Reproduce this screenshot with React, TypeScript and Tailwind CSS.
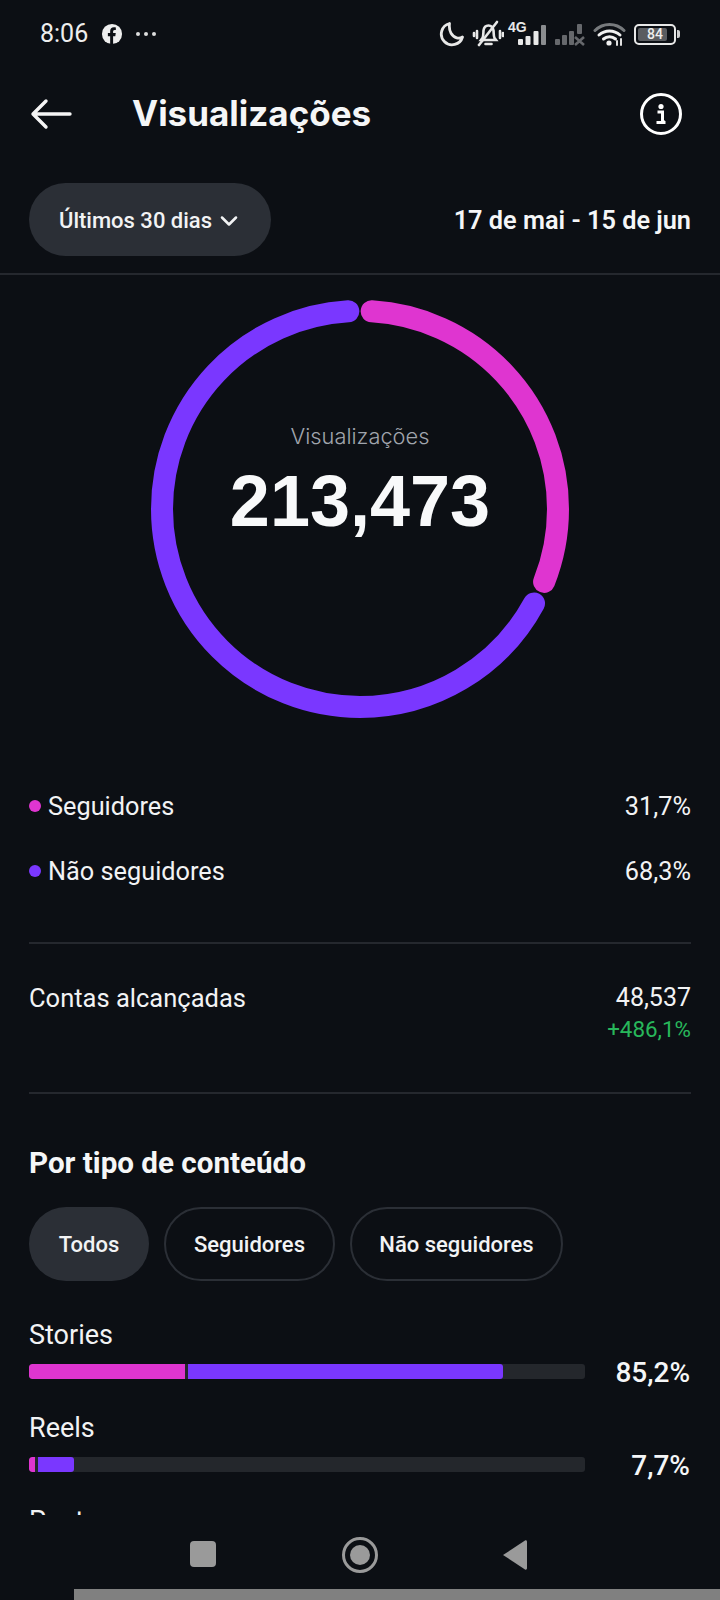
import React from 'react';
import { ChevronDown } from 'lucide-react';

const StatusIcons = () => (
  <div className="ml-auto flex items-center">
    <svg width="26" height="26" viewBox="0 0 26 26" fill="none" className="mr-[7px]">
      <path d="M10.5 2.5a10.8 10.8 0 1 0 13 13.5c-1.7 1-3.8 1.3-5.8.8C13.2 15.6 9.5 10.8 10.5 2.5z" stroke="#e8e8e8" strokeWidth="2.8" strokeLinejoin="round" />
    </svg>
    <svg width="32" height="28" viewBox="0 0 32 28" fill="none" className="mr-[4px]" stroke="#e8e8e8" strokeWidth="2.6" strokeLinecap="round">
      <path d="M10.5 18c1-2 .8-5 1-7.5.4-3 2.5-5 5-5s4.5 2 5 5c.3 2.5 0 5.5 1 7.5l1.5 2H9z" />
      <path d="M13.5 24h6" />
      <path d="M5 11v7M2 13v3M28 11v7M31 13v3" />
      <path d="M7 25L25 2" />
    </svg>
    <div className="relative mr-[8px] h-[26px] w-[39px]">
      <span className="absolute left-0 top-[-1px] font-['Liberation_Sans',sans-serif] text-[14px] leading-[14px] font-bold text-[#e8e8e8]">4G</span>
      <svg width="39" height="26" viewBox="0 0 39 26" className="absolute left-0 top-0" fill="#e8e8e8">
        <rect x="10" y="18" width="5" height="6" rx="1" />
        <rect x="17.5" y="15" width="5" height="9" rx="1" />
        <rect x="25.5" y="10" width="5" height="14" rx="1" />
        <rect x="33" y="4" width="5" height="20" rx="1" fill="#8a8c8f" />
      </svg>
    </div>
    <svg width="31" height="26" viewBox="0 0 31 26" fill="#66686c" className="mr-[7px]">
      <rect x="0" y="18" width="5" height="6" rx="1" />
      <rect x="7" y="14" width="5" height="10" rx="1" />
      <rect x="14" y="10" width="5" height="14" rx="1" />
      <rect x="22" y="3" width="5" height="10" rx="1" />
      <path d="M20 16l9 8M29 16l-9 8" stroke="#66686c" strokeWidth="2.6" fill="none" />
    </svg>
    <svg width="33" height="26" viewBox="0 0 33 26" fill="none" className="mr-[8px]" strokeLinecap="round">
      <path d="M2 9.5c8-8 21-8 29 0" stroke="#777a7d" strokeWidth="3" />
      <path d="M6 14c6-5.5 15-5.5 21 0" stroke="#f0f0f0" strokeWidth="3" />
      <path d="M10.5 18c3.5-3 8.5-3 12 0" stroke="#f0f0f0" strokeWidth="3" />
      <circle cx="16" cy="22" r="2.6" fill="#f0f0f0" />
      <path d="M24 24v-4M28 24v-6" stroke="#e0e0e0" strokeWidth="2" />
    </svg>
    <div className="flex items-center">
      <div className="relative h-[21px] w-[42px] rounded-[5px] border-2 border-[#e8e8e8] p-[2px]">
        <div className="h-full w-[84%] rounded-[2px] bg-[#5a5c60]" />
        <span className="absolute inset-0 flex items-center justify-center text-[14px] font-medium text-[#eeeeee]">84</span>
      </div>
      <div className="ml-[1px] h-[8px] w-[3px] rounded-r-[2px] bg-[#d0d0d0]" />
    </div>
  </div>
);

const Bar = ({ label, value, pink, blue }: { label: string; value: string; pink: number; blue: number }) => (
  <div>
    <div className="text-[27px] leading-[28px] text-[#f2f3f4]">{label}</div>
    <div className="mt-[15px] flex h-[15px] items-center">
      <div className="flex h-[15px] w-[556px] overflow-hidden rounded-[3px] bg-[#24272c]">
        <div className="h-full rounded-l-[3px] bg-[#df35d0]" style={{ width: pink }} />
        <div className="ml-[3px] h-full rounded-r-[3px] bg-[#7a37ff]" style={{ width: blue }} />
      </div>
      <span className="ml-auto pt-[2px] text-[28px] leading-[15px] font-medium text-[#f5f6f7]">{value}</span>
    </div>
  </div>
);

const App = () => {
  return (
    <div className="relative flex h-[1600px] w-[720px] flex-col overflow-hidden bg-[#0c0f14] font-['Roboto',sans-serif] text-white">
      {/* status bar */}
      <div className="flex h-[68px] items-center px-[40px]">
        <span className="text-[25px] font-normal text-[#eeeeee]">8:06</span>
        <svg width="22" height="22" viewBox="0 0 24 24" className="ml-[13px]">
          <circle cx="12" cy="12" r="11" fill="#eeeeee" />
          <path d="M10 23v-8.5H7.5V11H10V8.7C10 6 11.6 4.6 14 4.6c1.1 0 2.2.2 2.2.2v2.7h-1.3c-1.3 0-1.7.8-1.700 1.600V11h2.900l-.5 3.500h-2.400V23z" fill="#0c0f14" />
        </svg>
        <div className="ml-[13px] flex gap-[4px]">
          <span className="h-[4px] w-[4px] rounded-full bg-[#dddddd]" />
          <span className="h-[4px] w-[4px] rounded-full bg-[#dddddd]" />
          <span className="h-[4px] w-[4px] rounded-full bg-[#dddddd]" />
        </div>
        <StatusIcons />
      </div>

      {/* header */}
      <div className="flex h-[92px] items-center pl-[30px] pr-[38px]">
        <svg width="42" height="32" viewBox="0 0 42 32" fill="none" stroke="#f5f5f5" strokeWidth="3.4" strokeLinecap="round" strokeLinejoin="round">
          <path d="M40 16H3M16 3L3 16l13 13" />
        </svg>
        <h1 className="ml-[60px] pb-[1px] font-['Inter',sans-serif] text-[35px] font-bold text-[#f5f6f7]">Visualizações</h1>
        <svg width="42" height="42" viewBox="0 0 42 42" fill="none" className="ml-auto">
          <circle cx="21" cy="21" r="19.5" stroke="#ffffff" strokeWidth="3" />
          <circle cx="21" cy="13.5" r="2.6" fill="#ffffff" />
          <path d="M17.5 19h5v10h2.5M16.5 29.5h9" stroke="#ffffff" strokeWidth="3" />
        </svg>
      </div>

      {/* range */}
      <div className="mt-[23px] flex items-center justify-between px-[29px]">
        <button className="flex h-[73px] w-[242px] items-center rounded-full bg-[#2b2f36] pl-[30px] pt-[2px] text-[22px] font-medium text-[#f2f3f4]">
          Últimos 30 dias
          <ChevronDown className="ml-[3px]" size={28} strokeWidth={2.2} />
        </button>
        <span className="pt-[2px] text-[25.3px] font-semibold text-[#f5f6f7]">17 de mai - 15 de jun</span>
      </div>
      <div className="mt-[17px] h-[2px] bg-[#25282e]" />

      {/* donut */}
      <div className="relative mx-auto mt-[25px] h-[418px] w-[418px]">
        <svg width="418" height="418" viewBox="0 0 418 418" fill="none">
          <g transform="rotate(-90 209 209)" strokeWidth="22" strokeLinecap="round">
            <circle cx="209" cy="209" r="198" pathLength={360} stroke="#7a37ff" strokeDasharray="238.1 121.9" strokeDashoffset={-118.5} />
            <circle cx="209" cy="209" r="198" pathLength={360} stroke="#df35d0" strokeDasharray="108.2 251.8" strokeDashoffset={-3.4} />
          </g>
        </svg>
        <div className="absolute inset-0 flex flex-col items-center pt-[122px]">
          <span className="font-['Inter',sans-serif] text-[21.8px] leading-[28px] font-light text-[#a0a5ad]">Visualizações</span>
          <span className="mt-[9px] font-['Liberation_Sans',sans-serif] text-[72px] leading-[84px] font-bold text-[#f8f9fa]">213,473</span>
        </div>
      </div>

      {/* legend */}
      <div className="mt-[75px] flex flex-col gap-[37px] px-[29px] text-[25.3px] leading-[28px] text-[#f2f3f4]">
        <div className="flex items-center">
          <span className="mr-[7px] h-[12px] w-[12px] -translate-y-[1px] rounded-full bg-[#df35d0]" />
          Seguidores
          <span className="ml-auto">31,7%</span>
        </div>
        <div className="flex items-center">
          <span className="mr-[7px] h-[12px] w-[12px] -translate-y-[1px] rounded-full bg-[#7a37ff]" />
          Não seguidores
          <span className="ml-auto">68,3%</span>
        </div>
      </div>
      <div className="mx-[29px] mt-[56px] h-[2px] bg-[#25282e]" />

      <div className="mt-[40px] flex justify-between px-[29px]">
        <span className="text-[25.5px] leading-[28px] text-[#f2f3f4]">Contas alcançadas</span>
        <div className="text-right">
          <div className="text-[25px] leading-[28px] text-[#f2f3f4]">48,537</div>
          <div className="mt-[3px] text-[22.4px] leading-[28px] text-[#28b75b]">+486,1%</div>
        </div>
      </div>
      <div className="mx-[29px] mt-[49px] h-[2px] bg-[#25282e]" />

      {/* content type */}
      <h2 className="mt-[52px] px-[29px] text-[29.6px] leading-[34px] font-bold text-[#f5f6f7]">Por tipo de conteúdo</h2>
      <div className="mt-[27px] flex gap-[15px] px-[29px] text-[22px] font-medium text-[#f2f3f4]">
        <button className="h-[74px] w-[120px] rounded-full bg-[#2b2f36]">Todos</button>
        <button className="h-[74px] w-[171px] rounded-full border-2 border-[#2b2f36]">Seguidores</button>
        <button className="h-[74px] w-[213px] rounded-full border-2 border-[#2b2f36]">Não seguidores</button>
      </div>

      <div className="mt-[40px] flex flex-col gap-[35px] pl-[29px] pr-[30px]">
        <Bar label="Stories" value="85,2%" pink={156} blue={315} />
        <Bar label="Reels" value="7,7%" pink={6} blue={36} />
        <Bar label="Posts" value="" pink={2} blue={2} />
      </div>

      {/* android nav */}
      <div className="absolute bottom-0 left-0 right-0 h-[85px] bg-[#0c0f14]">
        <div className="relative h-full">
          <div className="absolute left-[190px] top-[26px] h-[26px] w-[26px] rounded-[4px] bg-[#9a9a9a]" />
          <div className="absolute left-[342px] top-[22px] flex h-[36px] w-[36px] items-center justify-center rounded-full border-[3px] border-[#9a9a9a]">
            <div className="h-[20px] w-[20px] rounded-full bg-[#9a9a9a]" />
          </div>
          <svg width="26" height="32" viewBox="0 0 26 32" className="absolute left-[502px] top-[24px]">
            <path d="M1 16L23 1.5c1-.6 2 0 2 1.2v26.6c0 1.2-1 1.8-2 1.2z" fill="#9a9a9a" />
          </svg>
          <div className="absolute bottom-0 left-[74px] right-0 h-[11px] bg-[#808080]" />
        </div>
      </div>
    </div>
  );
};

export default App;
